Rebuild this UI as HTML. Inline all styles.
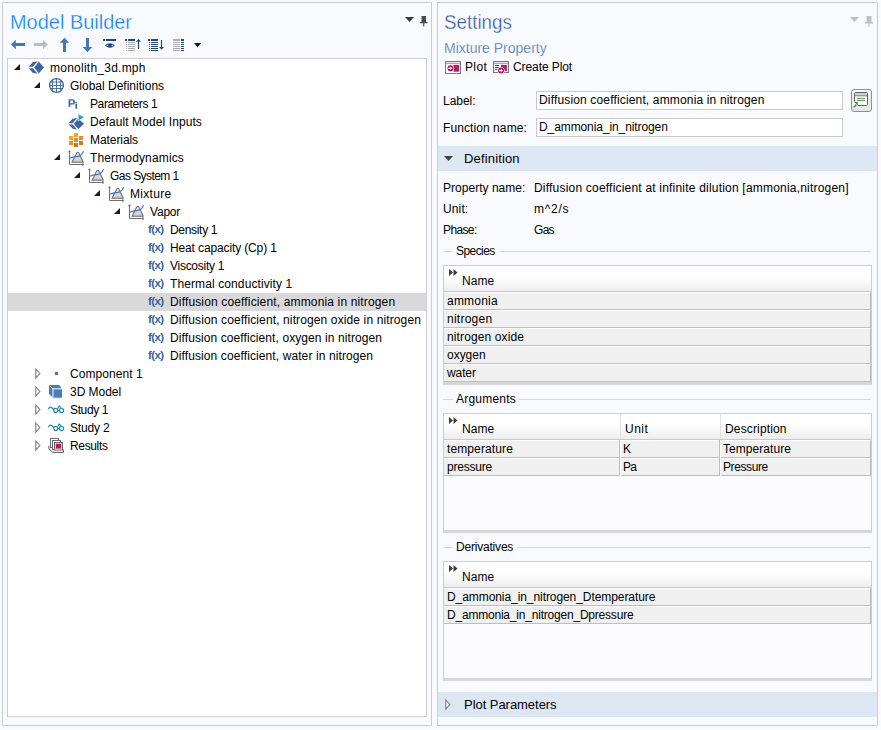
<!DOCTYPE html><html><head><meta charset="utf-8"><style>
*{margin:0;padding:0;box-sizing:border-box}
html,body{width:881px;height:730px;overflow:hidden;background:#F9FAFD;font-family:"Liberation Sans",sans-serif;font-size:12px;color:#000}
.abs{position:absolute}
.t{position:absolute;white-space:nowrap;line-height:18px;height:18px;font-size:12px}
svg{position:absolute;overflow:visible}
</style></head><body>
<div class="abs" style="left:2px;top:2px;width:430px;height:724px;border:1px solid #CACDD2;background:#F9FAFE"></div>
<div class="abs" style="left:10px;top:10px;font-size:21px;line-height:24px;color:#0C82F0;white-space:nowrap;transform:scaleX(0.95);transform-origin:0 0;-webkit-text-stroke:0.3px #F9FAFE">Model Builder</div>
<div class="abs" style="left:7px;top:58px;width:420px;height:659px;border:1px solid #CFCFD2;background:#FFFFFF"></div>
<svg style="left:13px;top:64px" width="7" height="7"><path d="M7 0 L7 6 L1 6 Z" fill="#1A1A1A"/></svg>
<svg style="left:27px;top:60px" width="18" height="15" viewBox="27 60 18 15"><g transform="translate(0 0)"><path d="M28 67.5 L33 62 L38.5 61.2 L44 67.5 L38.5 73.8 L33 73 Z" fill="#3F65A0"/><path d="M28 67.5 H33.3 L38.3 61.3 M33.3 67.5 L38.3 73.7" fill="none" stroke="#fff" stroke-width="1.3"/></g></svg>
<div class="t" id="t1" style="left:50px;top:59px;letter-spacing:0.243px;">monolith_3d.mph</div>
<svg style="left:33px;top:82px" width="7" height="7"><path d="M7 0 L7 6 L1 6 Z" fill="#1A1A1A"/></svg>
<svg style="left:48px;top:77px" width="18" height="18" viewBox="48 77 18 18"><g transform="translate(0 0)" fill="none" stroke="#3F65A0"><circle cx="56.5" cy="85.5" r="6.9" stroke-width="1.3"/><path d="M52.5 79.5 V91.5 M56.5 78.5 V92.5 M60.5 79.5 V91.5 M50 82 H63 M49.5 85.5 H63.5 M50 88.5 H63" stroke-width="0.9"/></g></svg>
<div class="t" id="t2" style="left:70px;top:77px;letter-spacing:0.000px;">Global Definitions</div>
<svg style="left:67px;top:98px" width="12" height="12" viewBox="67 98 12 12"><g transform="translate(0 0)" fill="#3F65A0"><path d="M68.6 99.3 H72.3 Q75 99.3 75 101.9 Q75 104.6 72.3 104.6 H70.3 V107 H68.6 Z M70.3 100.6 V103.3 H72.2 Q73.3 103.3 73.3 101.95 Q73.3 100.6 72.2 100.6 Z"/><rect x="75.4" y="101.9" width="1.7" height="1.5"/><rect x="75.4" y="104" width="1.7" height="4.8"/></g></svg>
<div class="t" id="t3" style="left:90px;top:95px;letter-spacing:-0.400px;">Parameters 1</div>
<svg style="left:67px;top:113px" width="18" height="18" viewBox="67 113 18 18"><g transform="translate(0 0)"><path d="M68 123.8 L72.5 118.8 L77.5 118 L84 123.8 L78 129.6 L73 129 Z" fill="#3F65A0"/><path d="M68.2 123.8 H73 L77.5 118.3 M73 123.8 L77.8 129.5" fill="none" stroke="#fff" stroke-width="1.2"/><path d="M78.2 113.8 L84.4 117.3 L78.2 120.9 Z" fill="#19A6C4" stroke="#fff" stroke-width="0.6"/></g></svg>
<div class="t" id="t4" style="left:90px;top:113px;letter-spacing:0.095px;">Default Model Inputs</div>
<svg style="left:68px;top:132px" width="17" height="16" viewBox="68 132 17 16"><g transform="translate(0 0)"><rect x="74" y="133" width="4" height="4" fill="#F9A51A"/><rect x="69" y="136" width="4" height="4" fill="#F9A31C"/><rect x="74" y="138" width="4" height="4" fill="#F08A1C"/><rect x="79" y="136" width="4" height="4" fill="#EF8A1E"/><rect x="69" y="141" width="4" height="4" fill="#F0901F"/><rect x="79" y="141" width="4" height="4" fill="#D6781A"/><rect x="74" y="143" width="4" height="4" fill="#D57417"/></g></svg>
<div class="t" id="t5" style="left:90px;top:131px;letter-spacing:-0.075px;">Materials</div>
<svg style="left:53px;top:154px" width="7" height="7"><path d="M7 0 L7 6 L1 6 Z" fill="#1A1A1A"/></svg>
<svg style="left:67px;top:149px" width="18" height="17" viewBox="67 149 18 17"><g transform="translate(0 0)"><defs><linearGradient id="tg" x1="0" y1="0" x2="0" y2="1"><stop offset="0" stop-color="#F0F0F0"/><stop offset="1" stop-color="#C8C8C8"/></linearGradient></defs><path d="M72 162.3 L76.6 153.3 Q77.8 151.3 79 153.3 L83.3 162.3 Z" fill="url(#tg)" stroke="#6E6E6E" stroke-width="1.1" stroke-linejoin="round"/><path d="M69.5 151 V164.5 H83.8" fill="none" stroke="#707070" stroke-width="1"/><path d="M68.3 152.3 L69.5 150.6 L70.7 152.3 M82.3 163.3 L84 164.5 L82.3 165.7" fill="none" stroke="#707070" stroke-width="0.9"/><path d="M70 158.4 C72 156.8 74 157 76 156.7 C79 156.3 81.5 156.5 83.5 151.2" fill="none" stroke="#3F78C8" stroke-width="1.2"/></g></svg>
<div class="t" id="t6" style="left:90px;top:149px;letter-spacing:0.138px;">Thermodynamics</div>
<svg style="left:73px;top:172px" width="7" height="7"><path d="M7 0 L7 6 L1 6 Z" fill="#1A1A1A"/></svg>
<svg style="left:87px;top:167px" width="18" height="17" viewBox="87 167 18 17"><g transform="translate(20 18)"><defs><linearGradient id="tg" x1="0" y1="0" x2="0" y2="1"><stop offset="0" stop-color="#F0F0F0"/><stop offset="1" stop-color="#C8C8C8"/></linearGradient></defs><path d="M72 162.3 L76.6 153.3 Q77.8 151.3 79 153.3 L83.3 162.3 Z" fill="url(#tg)" stroke="#6E6E6E" stroke-width="1.1" stroke-linejoin="round"/><path d="M69.5 151 V164.5 H83.8" fill="none" stroke="#707070" stroke-width="1"/><path d="M68.3 152.3 L69.5 150.6 L70.7 152.3 M82.3 163.3 L84 164.5 L82.3 165.7" fill="none" stroke="#707070" stroke-width="0.9"/><path d="M70 158.4 C72 156.8 74 157 76 156.7 C79 156.3 81.5 156.5 83.5 151.2" fill="none" stroke="#3F78C8" stroke-width="1.2"/></g></svg>
<div class="t" id="t7" style="left:110px;top:167px;letter-spacing:-0.554px;">Gas System 1</div>
<svg style="left:93px;top:190px" width="7" height="7"><path d="M7 0 L7 6 L1 6 Z" fill="#1A1A1A"/></svg>
<svg style="left:107px;top:185px" width="18" height="17" viewBox="107 185 18 17"><g transform="translate(40 36)"><defs><linearGradient id="tg" x1="0" y1="0" x2="0" y2="1"><stop offset="0" stop-color="#F0F0F0"/><stop offset="1" stop-color="#C8C8C8"/></linearGradient></defs><path d="M72 162.3 L76.6 153.3 Q77.8 151.3 79 153.3 L83.3 162.3 Z" fill="url(#tg)" stroke="#6E6E6E" stroke-width="1.1" stroke-linejoin="round"/><path d="M69.5 151 V164.5 H83.8" fill="none" stroke="#707070" stroke-width="1"/><path d="M68.3 152.3 L69.5 150.6 L70.7 152.3 M82.3 163.3 L84 164.5 L82.3 165.7" fill="none" stroke="#707070" stroke-width="0.9"/><path d="M70 158.4 C72 156.8 74 157 76 156.7 C79 156.3 81.5 156.5 83.5 151.2" fill="none" stroke="#3F78C8" stroke-width="1.2"/></g></svg>
<div class="t" id="t8" style="left:130px;top:185px;letter-spacing:0.301px;">Mixture</div>
<svg style="left:113px;top:208px" width="7" height="7"><path d="M7 0 L7 6 L1 6 Z" fill="#1A1A1A"/></svg>
<svg style="left:127px;top:203px" width="18" height="17" viewBox="127 203 18 17"><g transform="translate(60 54)"><defs><linearGradient id="tg" x1="0" y1="0" x2="0" y2="1"><stop offset="0" stop-color="#F0F0F0"/><stop offset="1" stop-color="#C8C8C8"/></linearGradient></defs><path d="M72 162.3 L76.6 153.3 Q77.8 151.3 79 153.3 L83.3 162.3 Z" fill="url(#tg)" stroke="#6E6E6E" stroke-width="1.1" stroke-linejoin="round"/><path d="M69.5 151 V164.5 H83.8" fill="none" stroke="#707070" stroke-width="1"/><path d="M68.3 152.3 L69.5 150.6 L70.7 152.3 M82.3 163.3 L84 164.5 L82.3 165.7" fill="none" stroke="#707070" stroke-width="0.9"/><path d="M70 158.4 C72 156.8 74 157 76 156.7 C79 156.3 81.5 156.5 83.5 151.2" fill="none" stroke="#3F78C8" stroke-width="1.2"/></g></svg>
<div class="t" id="t9" style="left:150px;top:203px;letter-spacing:-0.200px;">Vapor</div>
<div class="abs" style="left:148px;top:223px;font-size:11.5px;line-height:12px;color:#3A62A0;white-space:nowrap;letter-spacing:-0.6px;font-weight:bold">f(x)</div>
<div class="t" id="t10" style="left:170px;top:221px;letter-spacing:-0.311px;">Density 1</div>
<div class="abs" style="left:148px;top:241px;font-size:11.5px;line-height:12px;color:#3A62A0;white-space:nowrap;letter-spacing:-0.6px;font-weight:bold">f(x)</div>
<div class="t" id="t11" style="left:170px;top:239px;letter-spacing:-0.131px;">Heat capacity (Cp) 1</div>
<div class="abs" style="left:148px;top:259px;font-size:11.5px;line-height:12px;color:#3A62A0;white-space:nowrap;letter-spacing:-0.6px;font-weight:bold">f(x)</div>
<div class="t" id="t12" style="left:170px;top:257px;letter-spacing:-0.270px;">Viscosity 1</div>
<div class="abs" style="left:148px;top:277px;font-size:11.5px;line-height:12px;color:#3A62A0;white-space:nowrap;letter-spacing:-0.6px;font-weight:bold">f(x)</div>
<div class="t" id="t13" style="left:170px;top:275px;letter-spacing:0.105px;">Thermal conductivity 1</div>
<div class="abs" style="left:8px;top:293px;width:418px;height:18px;background:#D9D9DC"></div>
<div class="abs" style="left:148px;top:295px;font-size:11.5px;line-height:12px;color:#3A62A0;white-space:nowrap;letter-spacing:-0.6px;font-weight:bold">f(x)</div>
<div class="t" id="t14" style="left:170px;top:293px;letter-spacing:0.149px;">Diffusion coefficient, ammonia in nitrogen</div>
<div class="abs" style="left:148px;top:313px;font-size:11.5px;line-height:12px;color:#3A62A0;white-space:nowrap;letter-spacing:-0.6px;font-weight:bold">f(x)</div>
<div class="t" id="t15" style="left:170px;top:311px;letter-spacing:0.121px;">Diffusion coefficient, nitrogen oxide in nitrogen</div>
<div class="abs" style="left:148px;top:331px;font-size:11.5px;line-height:12px;color:#3A62A0;white-space:nowrap;letter-spacing:-0.6px;font-weight:bold">f(x)</div>
<div class="t" id="t16" style="left:170px;top:329px;letter-spacing:0.091px;">Diffusion coefficient, oxygen in nitrogen</div>
<div class="abs" style="left:148px;top:349px;font-size:11.5px;line-height:12px;color:#3A62A0;white-space:nowrap;letter-spacing:-0.6px;font-weight:bold">f(x)</div>
<div class="t" id="t17" style="left:170px;top:347px;letter-spacing:0.102px;">Diffusion coefficient, water in nitrogen</div>
<svg style="left:35px;top:369px" width="6" height="10"><path d="M0.8 0 L4.9 4.5 L0.8 9 Z" fill="#FFFFFF" stroke="#7C7C7C" stroke-width="1.1"/></svg>
<div class="abs" style="left:55px;top:372px;width:3px;height:3px;background:#3F74B8"></div>
<div class="t" id="t18" style="left:70px;top:365px;letter-spacing:0.060px;">Component 1</div>
<svg style="left:35px;top:387px" width="6" height="10"><path d="M0.8 0 L4.9 4.5 L0.8 9 Z" fill="#FFFFFF" stroke="#7C7C7C" stroke-width="1.1"/></svg>
<svg style="left:48px;top:384px" width="16" height="15" viewBox="48 384 16 15"><g transform="translate(0 0)"><path d="M49 385 H59 L62 388.5 V397.8 H53 L49 394 Z" fill="#4A7CC0"/><path d="M49.5 385.5 L53 389 V397.5 M53 388.8 H62" fill="none" stroke="#fff" stroke-width="1"/></g></svg>
<div class="t" id="t19" style="left:70px;top:383px;letter-spacing:-0.043px;">3D Model</div>
<svg style="left:35px;top:405px" width="6" height="10"><path d="M0.8 0 L4.9 4.5 L0.8 9 Z" fill="#FFFFFF" stroke="#7C7C7C" stroke-width="1.1"/></svg>
<svg style="left:47px;top:404px" width="18" height="10" viewBox="47 404 18 10"><g transform="translate(0 0)" fill="none" stroke="#1E8A9E" stroke-width="1.2" stroke-linejoin="round"><path d="M48.3 409.2 Q50 406.2 51.5 407.5 L53.8 409.5"/><path d="M53.8 409.3 L55.3 408.3 L57.2 408.5 L57.8 410.5 L56.8 412.3 L54.8 412.3 L53.8 410.8 Z"/><path d="M59.6 409 L61.5 408.3 L63.4 409.3 L63.6 411.3 L62.3 412.6 L60.3 412.4 L59.4 410.8 Z"/><path d="M57.6 410.3 H59.5 M58.3 408 L59 406 L61 407.5"/></g></svg>
<div class="t" id="t20" style="left:70px;top:401px;letter-spacing:-0.366px;">Study 1</div>
<svg style="left:35px;top:423px" width="6" height="10"><path d="M0.8 0 L4.9 4.5 L0.8 9 Z" fill="#FFFFFF" stroke="#7C7C7C" stroke-width="1.1"/></svg>
<svg style="left:47px;top:422px" width="18" height="10" viewBox="47 422 18 10"><g transform="translate(0 18)" fill="none" stroke="#1E8A9E" stroke-width="1.2" stroke-linejoin="round"><path d="M48.3 409.2 Q50 406.2 51.5 407.5 L53.8 409.5"/><path d="M53.8 409.3 L55.3 408.3 L57.2 408.5 L57.8 410.5 L56.8 412.3 L54.8 412.3 L53.8 410.8 Z"/><path d="M59.6 409 L61.5 408.3 L63.4 409.3 L63.6 411.3 L62.3 412.6 L60.3 412.4 L59.4 410.8 Z"/><path d="M57.6 410.3 H59.5 M58.3 408 L59 406 L61 407.5"/></g></svg>
<div class="t" id="t21" style="left:70px;top:419px;letter-spacing:-0.183px;">Study 2</div>
<svg style="left:35px;top:441px" width="6" height="10"><path d="M0.8 0 L4.9 4.5 L0.8 9 Z" fill="#FFFFFF" stroke="#7C7C7C" stroke-width="1.1"/></svg>
<svg style="left:47px;top:437px" width="18" height="17" viewBox="47 437 18 17"><g transform="translate(0 0)" stroke="#6A6A6A" stroke-width="1"><path d="M48.8 445.8 L48.8 448.8 L53 452.5 H63.5 V449.5" fill="#E8E8E8"/><rect x="50.5" y="438.5" width="8" height="9" fill="#FFFFFF"/><rect x="52.5" y="440.5" width="8" height="9" fill="#FFFFFF"/><rect x="54.5" y="442.5" width="8" height="7.5" fill="#FFFFFF"/><rect x="55.5" y="443.5" width="6" height="5.5" fill="#B5186A" stroke="#F0B8D4"/></g></svg>
<div class="t" id="t22" style="left:70px;top:437px;letter-spacing:-0.349px;">Results</div>
<svg style="left:9px;top:38px" width="18" height="13" viewBox="9 38 18 13"><path d="M11 44.5 L15.8 39.8 V43 H25 V46 H15.8 V49.2 Z" fill="#4377B8"/></svg>
<svg style="left:32px;top:38px" width="18" height="13" viewBox="32 38 18 13"><path d="M47.8 44.5 L43 39.8 V43 H33.8 V46 H43 V49.2 Z" fill="#BDBDBD"/></svg>
<svg style="left:58px;top:36px" width="13" height="18" viewBox="58 36 13 18"><path d="M64.5 37.8 L69.2 42.8 H66 V52 H63 V42.8 H59.8 Z" fill="#4377B8"/></svg>
<svg style="left:81px;top:36px" width="13" height="18" viewBox="81 36 13 18"><path d="M87.5 52.2 L92.2 47 H89 V38 H86 V47 H82.8 Z" fill="#4377B8"/></svg>
<svg style="left:102px;top:37px" width="16" height="13" viewBox="102 37 16 13"><rect x="103" y="39" width="2" height="2" fill="#1F4A7E"/><rect x="106" y="39" width="10" height="2" fill="#1F4A7E"/><path d="M104.8 45.5 Q110 41 114.9 45.5 Q110 50 104.8 45.5 Z" fill="#1F4A7E"/><circle cx="107.3" cy="45.5" r="0.8" fill="#fff"/><circle cx="112.4" cy="45.5" r="0.8" fill="#fff"/></svg>
<svg style="left:124px;top:37px" width="18" height="16" viewBox="124 37 18 16"><rect x="125" y="39" width="2" height="2" fill="#1F4A7E"/><rect x="128" y="39" width="7" height="2" fill="#1F4A7E"/><rect x="128" y="42" width="7" height="1" fill="#AEAEAE"/><rect x="126" y="42" width="1" height="1" fill="#AEAEAE"/><rect x="128" y="44" width="7" height="1" fill="#AEAEAE"/><rect x="126" y="44" width="1" height="1" fill="#AEAEAE"/><rect x="128" y="46" width="7" height="1" fill="#AEAEAE"/><rect x="126" y="46" width="1" height="1" fill="#AEAEAE"/><rect x="128" y="48" width="7" height="1" fill="#AEAEAE"/><rect x="126" y="48" width="1" height="1" fill="#AEAEAE"/><rect x="128" y="50" width="7" height="1" fill="#AEAEAE"/><rect x="126" y="50" width="1" height="1" fill="#AEAEAE"/><path d="M138.5 40.5 V49" stroke="#1F4A7E" stroke-width="1.2"/><path d="M136 41.8 L138.5 39 L141 41.8 Z" fill="#1F4A7E"/></svg>
<svg style="left:147px;top:37px" width="18" height="16" viewBox="147 37 18 16"><rect x="148" y="39" width="2" height="2" fill="#1F4A7E"/><rect x="151" y="39" width="7" height="2" fill="#1F4A7E"/><rect x="151" y="42" width="7" height="1" fill="#1F4A7E"/><rect x="149" y="42" width="1" height="1" fill="#1F4A7E"/><rect x="151" y="44" width="7" height="1" fill="#1F4A7E"/><rect x="149" y="44" width="1" height="1" fill="#1F4A7E"/><rect x="151" y="46" width="7" height="1" fill="#1F4A7E"/><rect x="149" y="46" width="1" height="1" fill="#1F4A7E"/><rect x="151" y="48" width="7" height="1" fill="#1F4A7E"/><rect x="149" y="48" width="1" height="1" fill="#1F4A7E"/><rect x="151" y="50" width="7" height="1" fill="#1F4A7E"/><rect x="149" y="50" width="1" height="1" fill="#1F4A7E"/><path d="M161.5 40 V48" stroke="#1F4A7E" stroke-width="1.2"/><path d="M159 47 L161.5 49.8 L164 47 Z" fill="#1F4A7E"/></svg>
<svg style="left:172px;top:37px" width="14" height="16" viewBox="172 37 14 16"><rect x="173" y="39" width="7" height="2" fill="#AEAEAE"/><rect x="181" y="39" width="3" height="2" fill="#1F4A7E"/><rect x="173" y="42" width="7" height="1" fill="#AEAEAE"/><rect x="181" y="42" width="3" height="1" fill="#1F4A7E"/><rect x="173" y="44" width="7" height="1" fill="#AEAEAE"/><rect x="181" y="44" width="3" height="1" fill="#1F4A7E"/><rect x="173" y="46" width="7" height="1" fill="#AEAEAE"/><rect x="181" y="46" width="3" height="1" fill="#1F4A7E"/><rect x="173" y="48" width="7" height="1" fill="#AEAEAE"/><rect x="181" y="48" width="3" height="1" fill="#1F4A7E"/><rect x="173" y="50" width="7" height="1" fill="#AEAEAE"/><rect x="181" y="50" width="3" height="1" fill="#1F4A7E"/></svg>
<svg style="left:193px;top:42px" width="9" height="6" viewBox="193 42 9 6"><path d="M194 43 H201.2 L197.6 47.3 Z" fill="#161616"/></svg>
<svg style="left:405px;top:17px" width="9" height="5"><path d="M0 0 H9 L4.5 5 Z" fill="#3C3C3C"/></svg>
<svg style="left:420px;top:16px" width="8" height="11"><path d="M1.5 0 H6 V6 H7.5 V7.3 H4.3 V10.5 H3.2 V7.3 H0 V6 H1.5 Z" fill="#4A4A4A"/></svg>
<div class="abs" style="left:437px;top:2px;width:441px;height:724px;border:1px solid #CACDD2;background:#F9FAFE"></div>
<div class="abs" style="left:444px;top:10px;font-size:21px;line-height:24px;color:#2A58A8;white-space:nowrap;transform:scaleX(0.895);transform-origin:0 0;-webkit-text-stroke:0.35px #F9FAFE">Settings</div>
<div class="abs" style="left:444px;top:39px;font-size:14px;line-height:18px;color:#3F68AE;white-space:nowrap;-webkit-text-stroke:0.25px #F9FAFE">Mixture Property</div>
<svg style="left:850px;top:17px" width="9" height="5"><path d="M0 0 H9 L4.5 5 Z" fill="#B9C1CC"/></svg>
<svg style="left:865px;top:16px" width="8" height="11"><path d="M1.5 0 H6.5 V6 H8 V7.5 H4.5 V11 H3.5 V7.5 H0 V6 H1.5 Z" fill="#B9C1CC"/></svg>
<div class="t" id="t23" style="left:465px;top:58px;letter-spacing:0.367px;">Plot</div>
<div class="t" id="t24" style="left:513px;top:58px;letter-spacing:-0.090px;">Create Plot</div>
<div class="t" id="t25" style="left:443px;top:92px;letter-spacing:-0.040px;">Label:</div>
<div class="abs" style="left:536px;top:91px;width:307px;height:19px;border:1px solid #CACACA;background:#FFF"></div>
<div class="t" id="t26" style="left:539px;top:91px;letter-spacing:0.155px;">Diffusion coefficient, ammonia in nitrogen</div>
<div class="t" id="t27" style="left:443px;top:119px;letter-spacing:0.084px;">Function name:</div>
<div class="abs" style="left:536px;top:118px;width:307px;height:19px;border:1px solid #CACACA;background:#FFF"></div>
<div class="t" id="t28" style="left:539px;top:118px;letter-spacing:-0.095px;">D_ammonia_in_nitrogen</div>
<div class="abs" style="left:438px;top:146px;width:439px;height:25px;background:#DDE7F3"></div>
<svg style="left:444px;top:156px" width="9" height="5"><path d="M0 0 H9 L4.5 5 Z" fill="#404040"/></svg>
<div class="t" id="t29" style="left:464px;top:150px;font-size:13px;letter-spacing:0.156px;">Definition</div>
<div class="t" id="t30" style="left:443px;top:179px;letter-spacing:0.023px;">Property name:</div>
<div class="t" id="t31" style="left:534px;top:179px;letter-spacing:0.202px;">Diffusion coefficient at infinite dilution [ammonia,nitrogen]</div>
<div class="t" id="t32" style="left:443px;top:200px;letter-spacing:0.125px;">Unit:</div>
<div class="t" id="t33" style="left:534px;top:200px;letter-spacing:0.700px;">m^2/s</div>
<div class="t" id="t34" style="left:443px;top:221px;letter-spacing:-0.620px;">Phase:</div>
<div class="t" id="t35" style="left:534px;top:221px;letter-spacing:-0.700px;">Gas</div>
<div class="abs" style="left:443px;top:251px;width:428px;height:1px;background:#D5D8DD"></div>
<div class="abs" style="left:453px;top:246px;width:46px;height:10px;background:#F9FAFE"></div>
<div class="t" id="t36" style="left:456px;top:242px;letter-spacing:-0.567px;">Species</div>
<div class="abs" style="left:443px;top:265px;width:429px;height:120px;border:1px solid #CDCDCD;border-bottom:3px solid #D6D6D6;background:#FCFCFE"></div>
<div class="abs" style="left:444px;top:266px;width:427px;height:26px;background:linear-gradient(#FFFFFF 40%,#EEEEF0);border-bottom:1px solid #C8C8C8"></div>
<svg style="left:449px;top:269px" width="9" height="7"><path d="M0 0 L4 3.5 L0 7 Z M4.5 0 L8.5 3.5 L4.5 7 Z" fill="#3C3C3C"/></svg>
<div class="t" id="t37" style="left:462px;top:272px;letter-spacing:0.067px;">Name</div>
<div class="abs" style="left:444px;top:292px;width:427px;height:18px;background:#F0F0F0;border-bottom:1px solid #BEBEBE;border-top:1px solid #FFFFFF;border-right:1px solid #B8B8B8"></div>
<div class="t" id="t38" style="left:447px;top:292px;letter-spacing:0.216px;">ammonia</div>
<div class="abs" style="left:444px;top:310px;width:427px;height:18px;background:#F0F0F0;border-bottom:1px solid #BEBEBE;border-top:1px solid #FFFFFF;border-right:1px solid #B8B8B8"></div>
<div class="t" id="t39" style="left:447px;top:310px;letter-spacing:0.243px;">nitrogen</div>
<div class="abs" style="left:444px;top:328px;width:427px;height:18px;background:#F0F0F0;border-bottom:1px solid #BEBEBE;border-top:1px solid #FFFFFF;border-right:1px solid #B8B8B8"></div>
<div class="t" id="t40" style="left:447px;top:328px;letter-spacing:0.116px;">nitrogen oxide</div>
<div class="abs" style="left:444px;top:346px;width:427px;height:18px;background:#F0F0F0;border-bottom:1px solid #BEBEBE;border-top:1px solid #FFFFFF;border-right:1px solid #B8B8B8"></div>
<div class="t" id="t41" style="left:447px;top:346px;letter-spacing:-0.020px;">oxygen</div>
<div class="abs" style="left:444px;top:364px;width:427px;height:18px;background:#F0F0F0;border-bottom:1px solid #BEBEBE;border-top:1px solid #FFFFFF;border-right:1px solid #B8B8B8"></div>
<div class="t" id="t42" style="left:447px;top:364px;letter-spacing:-0.100px;">water</div>
<div class="abs" style="left:443px;top:399px;width:428px;height:1px;background:#D5D8DD"></div>
<div class="abs" style="left:453px;top:394px;width:66px;height:10px;background:#F9FAFE"></div>
<div class="t" id="t43" style="left:456px;top:390px;letter-spacing:0.225px;">Arguments</div>
<div class="abs" style="left:443px;top:413px;width:429px;height:120px;border:1px solid #CDCDCD;border-bottom:3px solid #D6D6D6;background:#FCFCFE"></div>
<div class="abs" style="left:444px;top:414px;width:427px;height:26px;background:linear-gradient(#FFFFFF 40%,#EEEEF0);border-bottom:1px solid #C8C8C8"></div>
<svg style="left:449px;top:417px" width="9" height="7"><path d="M0 0 L4 3.5 L0 7 Z M4.5 0 L8.5 3.5 L4.5 7 Z" fill="#3C3C3C"/></svg>
<div class="t" id="t44" style="left:462px;top:420px;letter-spacing:0.067px;">Name</div>
<div class="abs" style="left:620px;top:414px;width:1px;height:25px;background:#E0E0E0"></div>
<div class="t" id="t45" style="left:625px;top:420px;letter-spacing:0.499px;">Unit</div>
<div class="abs" style="left:720px;top:414px;width:1px;height:25px;background:#E0E0E0"></div>
<div class="t" id="t46" style="left:725px;top:420px;letter-spacing:0.150px;">Description</div>
<div class="abs" style="left:444px;top:440px;width:427px;height:18px;background:#F0F0F0;border-bottom:1px solid #BEBEBE;border-top:1px solid #FFFFFF;border-right:1px solid #B8B8B8"></div>
<div class="t" id="t47" style="left:447px;top:440px;letter-spacing:0.110px;">temperature</div>
<div class="abs" style="left:619px;top:440px;width:1px;height:18px;background:#BEBEBE"></div>
<div class="abs" style="left:620px;top:440px;width:1px;height:18px;background:#FFFFFF"></div>
<div class="t" id="t48" style="left:623px;top:440px;letter-spacing:-0.700px;">K</div>
<div class="abs" style="left:719px;top:440px;width:1px;height:18px;background:#BEBEBE"></div>
<div class="abs" style="left:720px;top:440px;width:1px;height:18px;background:#FFFFFF"></div>
<div class="t" id="t49" style="left:723px;top:440px;letter-spacing:0.060px;">Temperature</div>
<div class="abs" style="left:444px;top:458px;width:427px;height:18px;background:#F0F0F0;border-bottom:1px solid #BEBEBE;border-top:1px solid #FFFFFF;border-right:1px solid #B8B8B8"></div>
<div class="t" id="t50" style="left:447px;top:458px;letter-spacing:-0.214px;">pressure</div>
<div class="abs" style="left:619px;top:458px;width:1px;height:18px;background:#BEBEBE"></div>
<div class="abs" style="left:620px;top:458px;width:1px;height:18px;background:#FFFFFF"></div>
<div class="t" id="t51" style="left:623px;top:458px;letter-spacing:-0.700px;">Pa</div>
<div class="abs" style="left:719px;top:458px;width:1px;height:18px;background:#BEBEBE"></div>
<div class="abs" style="left:720px;top:458px;width:1px;height:18px;background:#FFFFFF"></div>
<div class="t" id="t52" style="left:723px;top:458px;letter-spacing:-0.400px;">Pressure</div>
<div class="abs" style="left:443px;top:547px;width:428px;height:1px;background:#D5D8DD"></div>
<div class="abs" style="left:453px;top:542px;width:64px;height:10px;background:#F9FAFE"></div>
<div class="t" id="t53" style="left:456px;top:538px;letter-spacing:-0.200px;">Derivatives</div>
<div class="abs" style="left:443px;top:561px;width:429px;height:120px;border:1px solid #CDCDCD;border-bottom:3px solid #D6D6D6;background:#FCFCFE"></div>
<div class="abs" style="left:444px;top:562px;width:427px;height:26px;background:linear-gradient(#FFFFFF 40%,#EEEEF0);border-bottom:1px solid #C8C8C8"></div>
<svg style="left:449px;top:565px" width="9" height="7"><path d="M0 0 L4 3.5 L0 7 Z M4.5 0 L8.5 3.5 L4.5 7 Z" fill="#3C3C3C"/></svg>
<div class="t" id="t54" style="left:462px;top:568px;letter-spacing:0.067px;">Name</div>
<div class="abs" style="left:444px;top:588px;width:427px;height:18px;background:#F0F0F0;border-bottom:1px solid #BEBEBE;border-top:1px solid #FFFFFF;border-right:1px solid #B8B8B8"></div>
<div class="t" id="t55" style="left:447px;top:588px;letter-spacing:-0.073px;">D_ammonia_in_nitrogen_Dtemperature</div>
<div class="abs" style="left:444px;top:606px;width:427px;height:18px;background:#F0F0F0;border-bottom:1px solid #BEBEBE;border-top:1px solid #FFFFFF;border-right:1px solid #B8B8B8"></div>
<div class="t" id="t56" style="left:447px;top:606px;letter-spacing:-0.206px;">D_ammonia_in_nitrogen_Dpressure</div>
<div class="abs" style="left:438px;top:692px;width:439px;height:25px;background:#DDE7F3"></div>
<svg style="left:445px;top:700px" width="6" height="10"><path d="M0.8 0 L4.9 4.5 L0.8 9 Z" fill="#FFFFFF" stroke="#7C7C7C" stroke-width="1.1"/></svg>
<div class="t" id="t57" style="left:464px;top:696px;font-size:13px;letter-spacing:-0.043px;">Plot Parameters</div>
<svg style="left:444px;top:60px" width="18" height="15" viewBox="444 60 18 15"><rect x="445.5" y="61.5" width="15" height="12" fill="#FFFFFF" stroke="#787878"/><rect x="446" y="62" width="14" height="1.2" fill="#E8E8E8"/><path d="M446 63.6 H460" stroke="#8A8A8A" stroke-width="0.8"/><rect x="453.5" y="64.9" width="5.7" height="6.8" fill="#B01C6A"/><circle cx="450.5" cy="68.3" r="3.6" fill="#FFFFFF"/><circle cx="450.5" cy="68.3" r="3" fill="#A3145F"/><path d="M448.3 68.3 H450.8" stroke="#fff" stroke-width="1.3"/><path d="M450.3 66.6 L452.6 68.3 L450.3 70.0 Z" fill="#fff"/></svg>
<svg style="left:492px;top:60px" width="19" height="16" viewBox="492 60 19 16"><rect x="493.5" y="61.5" width="15" height="11" fill="#FFFFFF" stroke="#787878"/><rect x="494" y="62" width="14" height="1.2" fill="#E8E8E8"/><path d="M494 63.6 H508" stroke="#8A8A8A" stroke-width="0.8"/><rect x="500.9" y="64.9" width="6" height="6.2" fill="#B01C6A"/><path d="M495.1 65.5 H498.9 M495.1 67.5 H498.9 M495.1 69.5 H497.5" stroke="#1F3F80" stroke-width="1.1"/><circle cx="501" cy="70.5" r="3.6" fill="#FFFFFF"/><circle cx="501" cy="70.5" r="3" fill="#A3145F"/><path d="M498.8 70.5 H501.3" stroke="#fff" stroke-width="1.3"/><path d="M500.8 68.8 L503.1 70.5 L500.8 72.2 Z" fill="#fff"/></svg>
<div class="abs" style="left:851px;top:89px;width:21px;height:23px;border:1px solid #8E8E8E;border-radius:3px;background:linear-gradient(#F8F8F8,#E4E4E4)"></div>
<svg style="left:852px;top:90px" width="19" height="20" viewBox="852 90 19 20"><rect x="854.5" y="92.5" width="13" height="13" rx="1" fill="#FFFFFF" stroke="#606060"/><rect x="855" y="93" width="12" height="2.5" fill="#CFCFCF"/><path d="M855 95.8 H867" stroke="#606060" stroke-width="0.8"/><path d="M857 98.4 H865 M857 100.4 H865" stroke="#3C9A3C" stroke-width="0.9"/><rect x="853" y="101.6" width="5" height="5" fill="#FFFFFF"/><path d="M853.8 107.3 L856.3 104.6" stroke="#3C9A3C" stroke-width="1.6"/><path d="M854.2 102 H857.8 V105.6 Z" fill="#3C9A3C"/></svg>
</body></html>
